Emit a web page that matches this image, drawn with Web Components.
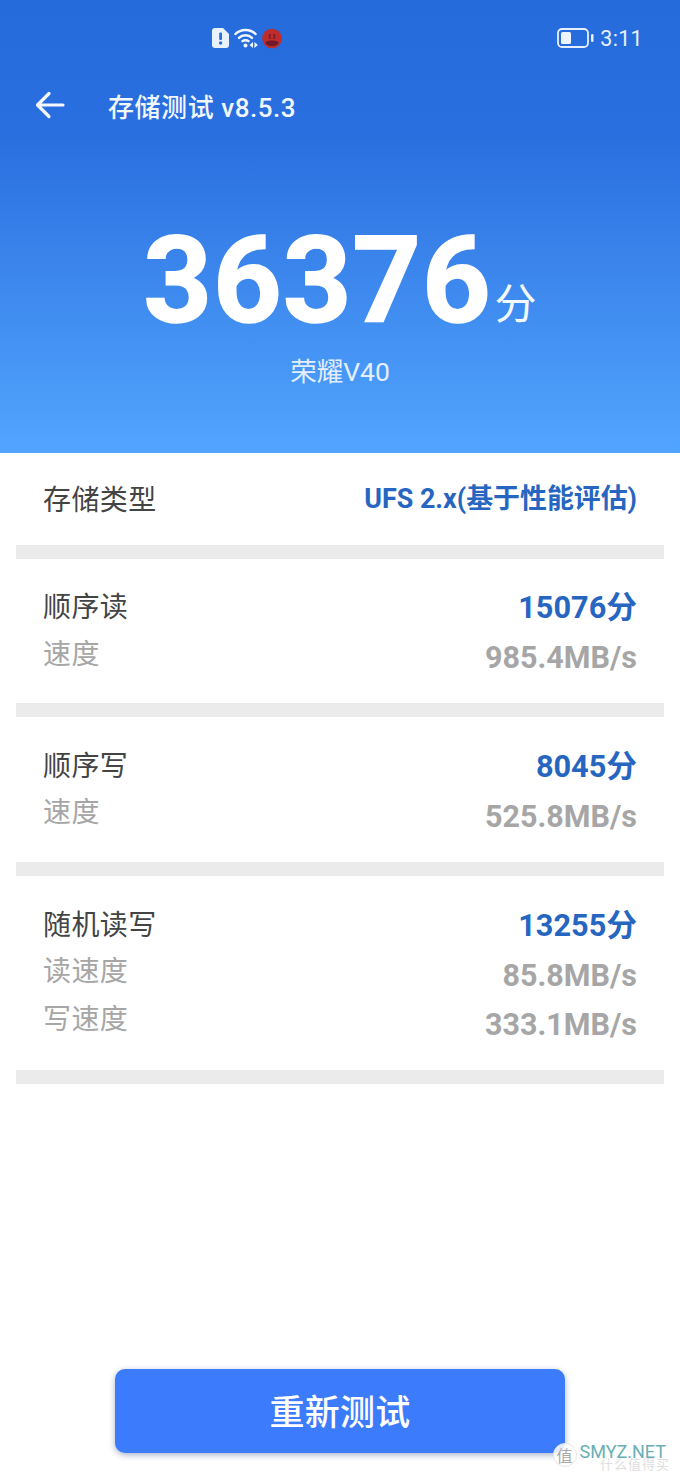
<!DOCTYPE html>
<html lang="zh">
<head>
<meta charset="utf-8">
<title>存储测试</title>
<style>
    html, body { margin: 0; height: 100%; background: #fff; }
    body { font-family: Roboto, "Noto Sans CJK SC", sans-serif; }
</style>
</head>
<body>
<bench-app></bench-app>

<script>
class StatusBar extends HTMLElement {
    constructor() {
        super();
        const shadow = this.attachShadow({ mode: 'open' });
        shadow.innerHTML = `
            <style>
            :host { display: flex; align-items: center; height: 76px; padding: 0 37px 0 212px; color: #e6f0fd; }
            .left { display: flex; align-items: center; gap: 5px; }
            .right { margin-left: auto; display: flex; align-items: center; gap: 6px; font-size: 21.500px; letter-spacing: .3px; }
            svg { display: block; }
            </style>
            <div class="left">
                <svg width="17" height="20" viewBox="0 0 17 20"><path d="M3 0h8l6 6v11a3 3 0 0 1-3 3H3a3 3 0 0 1-3-3V3a3 3 0 0 1 3-3z" fill="#e9f1fc"/><rect x="7.200" y="4.500" width="2.800" height="7.500" rx="1" fill="#2a6ddb"/><circle cx="8.600" cy="15" r="1.700" fill="#2a6ddb"/></svg>
                <svg width="24" height="20" viewBox="0 0 24 20" fill="none" stroke="#f1f6fd" stroke-width="2.500" stroke-linecap="round"><path d="M1.500 6C6.500 .5 16.500 .5 21.500 6"/><path d="M5 9.800C8.500 6.300 14.500 6.300 18 9.800"/><path d="M8.500 13.200C10 11.800 13 11.800 14.500 13.200"/><circle cx="11.500" cy="17.500" r="2" fill="#f1f6fd" stroke="none"/><path d="M19 14v6l-3.500-3zM20.400 14v6l3.500-3z" fill="#f1f6fd" stroke="none"/></svg>
                <svg style="margin-left:-1px" width="20" height="21" viewBox="0 0 20 21"><circle cx="10" cy="10.500" r="9.800" fill="#bf2c2c"/><path d="M3.500 14c3-2 10-2 13 0 1 5.500-14 5.500-13 0z" fill="#6e1a2a"/><rect x="6.800" y="6" width="1.800" height="5" fill="#7e1c28"/><rect x="11.400" y="6" width="1.800" height="5" fill="#7e1c28"/></svg>
            </div>
            <div class="right">
                <svg width="37" height="20" viewBox="0 0 37 20" fill="none"><rect x="1" y="1" width="30" height="18" rx="4" stroke="#e6f0fd" stroke-width="1.800"/><rect x="4" y="4" width="10" height="12" rx="1.500" fill="#eef4fd"/><rect x="34" y="6" width="2.500" height="8" rx="1.200" fill="#e6f0fd"/></svg>
                <span>3:11</span>
            </div>
        `;
    }
}
customElements.define("status-bar", StatusBar);

class TitleBar extends HTMLElement {
    constructor() {
        super();
        const shadow = this.attachShadow({ mode: 'open' });
        shadow.innerHTML = `
            <style>
            :host { display: flex; align-items: center; height: 60px; margin-top: -1px; padding-left: 35px; color: #f2f7fe; font-size: 26px; font-weight: 500; letter-spacing: .55px; }
            svg { display: block; margin-right: 43px; }
            </style>
            <svg width="30" height="30" viewBox="0 0 30 30" fill="none" stroke="#f4f8fe" stroke-width="3.200" stroke-linecap="round" stroke-linejoin="round"><path d="M28 15H3M14 3.500L2.500 15 14 26.500"/></svg>
            <slot></slot>
        `;
    }
}
customElements.define("title-bar", TitleBar);

class ScoreHero extends HTMLElement {
    constructor() {
        super();
        const shadow = this.attachShadow({ mode: 'open' });
        shadow.innerHTML = `
            <style>
            :host { display: block; height: 453px; box-sizing: border-box; background: linear-gradient(#256bdc 0%, #2a6fdf 30%, #52a5ff 100%); color: #fff; }
            .score { display: flex; justify-content: center; align-items: baseline; margin-top: 86px; height: 120px; line-height: 120px; }
            .num { font-size: 120px; font-weight: 700; letter-spacing: .8px; -webkit-text-stroke: 1.500px #fff; }
            .unit { font-size: 42px; margin-left: 3px; position: relative; top: -3px; color: #f4f9ff; }
            .device { text-align: center; margin-top: 16px; font-size: 26.500px; line-height: 30px; color: #e3effe; }
            </style>
            <status-bar></status-bar>
            <title-bar>存储测试 v8.5.3</title-bar>
            <div class="score"><span class="num"><slot name="score"></slot></span><span class="unit">分</span></div>
            <div class="device"><slot name="device"></slot></div>
        `;
    }
}
customElements.define("score-hero", ScoreHero);

class ResultCard extends HTMLElement {
    constructor() {
        super();
        const shadow = this.attachShadow({ mode: 'open' });
        shadow.innerHTML = `
            <style>
            :host { display: block; margin: 0 16px; padding: 27px 27px 19px; border-bottom: 14px solid #ebebeb; }
            </style>
            <slot></slot>
        `;
    }
}
customElements.define("result-card", ResultCard);

class ResultRow extends HTMLElement {
    static get observedAttributes() { return ["label", "value", "kind"]; }
    constructor() {
        super();
        const shadow = this.attachShadow({ mode: 'open' });
        shadow.innerHTML = `
            <style>
            :host { display: flex; justify-content: space-between; align-items: flex-start; height: 49px; }
            .label { font-size: 28px; letter-spacing: .4px; line-height: 44px; color: #444; }
            .value { font-size: 30.700px; line-height: 44px; font-weight: 700; color: #2666c1; }
            :host([kind="sub"]) .label { color: #a6a6a6; line-height: 36px; margin-top: var(--label-top, 1px); }
            :host([kind="sub"]) .value { color: #a6a6a6; line-height: 46px; font-size: 30.500px; }
            :host([kind="type"]) .value { font-size: 26.900px; margin-top: -2px; }
            </style>
            <span class="label" id="l"></span><span class="value" id="v"></span>
        `;
    }
    attributeChangedCallback() {
        this.shadowRoot.querySelector("#l").textContent = this.getAttribute("label");
        this.shadowRoot.querySelector("#v").textContent = this.getAttribute("value");
    }
}
customElements.define("result-row", ResultRow);

class RetestButton extends HTMLElement {
    constructor() {
        super();
        const shadow = this.attachShadow({ mode: 'open' });
        shadow.innerHTML = `
            <style>
            :host { display: flex; justify-content: center; align-items: center; width: 450px; height: 84px; margin: 0 auto; background: #3c7bfb; border-radius: 10px; color: #fff; font-size: 35px; font-weight: 500; letter-spacing: .3px; box-shadow: 0 2px 6px rgba(30, 60, 120, .4); cursor: pointer; }
            span { position: relative; top: -2px; }
            </style>
            <span><slot></slot></span>
        `;
    }
}
customElements.define("retest-button", RetestButton);

class WaterMark extends HTMLElement {
    constructor() {
        super();
        const shadow = this.attachShadow({ mode: 'open' });
        shadow.innerHTML = `
            <style>
            :host { position: absolute; right: 14px; bottom: 5px; display: flex; align-items: center; gap: 3px; color: #6aaeb4; font-size: 18px; }
            .dot { width: 24px; height: 24px; border-radius: 50%; background: rgba(255,255,255,.85); border: 1px solid #e6e6e6; color: #a8a8a8; font-size: 16px; display: flex; align-items: center; justify-content: center; box-sizing: border-box; }
            .name { position: relative; top: -4px; line-height: 13px; }
            .ghost { position: absolute; right: -4px; bottom: -4px; font-size: 13px; line-height: 12px; letter-spacing: 1px; color: #dedede; white-space: nowrap; }
            </style>
            <span class="dot">值</span><span class="name">SMYZ.NET</span><span class="ghost">什么值得买</span>
        `;
    }
}
customElements.define("water-mark", WaterMark);

class BenchApp extends HTMLElement {
    constructor() {
        super();
        const shadow = this.attachShadow({ mode: 'open' });
        shadow.innerHTML = `
            <style>
            :host { display: flex; flex-direction: column; position: relative; width: 680px; height: 1472px; overflow: hidden; background: #fff; }
            .push { flex: 1; }
            .foot { padding-bottom: 19px; }
            </style>
            <score-hero><span slot="score">36376</span><span slot="device">荣耀V40</span></score-hero>
            <result-card style="padding-top:26px;padding-bottom:17px"><result-row kind="type" label="存储类型" value="UFS 2.x(基于性能评估)"></result-row></result-card>
            <result-card>
                <result-row kind="main" label="顺序读" value="15076分"></result-row>
                <result-row kind="sub" label="速度" value="985.4MB/s" style="--label-top:2px"></result-row>
            </result-card>
            <result-card style="padding-top:28px">
                <result-row kind="main" label="顺序写" value="8045分"></result-row>
                <result-row kind="sub" label="速度" value="525.8MB/s"></result-row>
            </result-card>
            <result-card style="padding-top:28px">
                <result-row kind="main" label="随机读写" value="13255分"></result-row>
                <result-row kind="sub" label="读速度" value="85.8MB/s"></result-row>
                <result-row kind="sub" label="写速度" value="333.1MB/s" style="--label-top:0px"></result-row>
            </result-card>
            <div class="push"></div>
            <div class="foot"><retest-button>重新测试</retest-button></div>
            <water-mark></water-mark>
        `;
    }
}
customElements.define("bench-app", BenchApp);
</script>
</body>
</html>
